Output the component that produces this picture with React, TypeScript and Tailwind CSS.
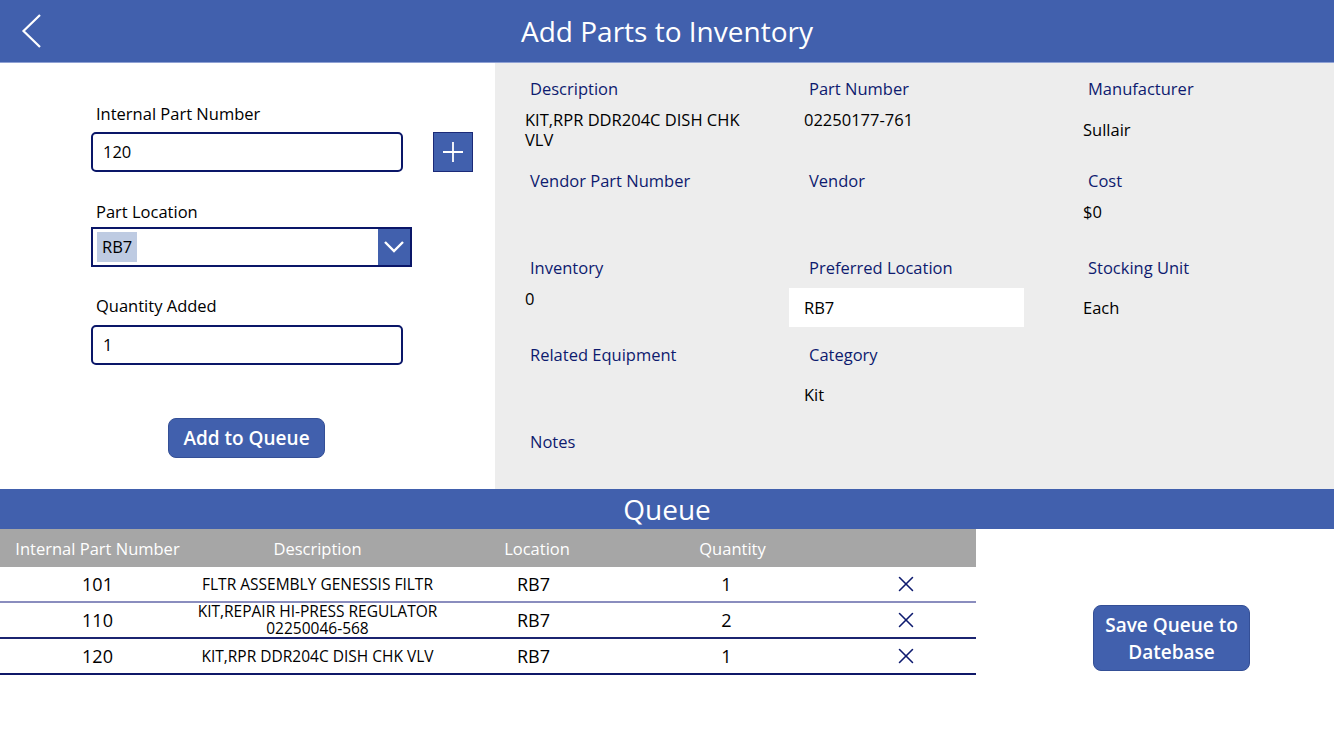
import { X } from "lucide-react";

const queue = [
  { id: "101", desc: ["FLTR ASSEMBLY GENESSIS FILTR"], loc: "RB7", qty: "1", line: "border-[#8A8DBE]" },
  { id: "110", desc: ["KIT,REPAIR HI-PRESS REGULATOR", "02250046-568"], loc: "RB7", qty: "2", line: "border-[#1B2470]" },
  { id: "120", desc: ["KIT,RPR DDR204C DISH CHK VLV"], loc: "RB7", qty: "1", line: "border-[#0F1868]" },
];

function Label(props: { children: React.ReactNode }) {
  return <div className="h-6 pl-[5px] leading-6 text-[16.5px] text-[#0E1B6F]">{props.children}</div>;
}

function Field(props: { label: string; value?: React.ReactNode; mt?: string }) {
  return (
    <div className="flex flex-col">
      <Label>{props.label}</Label>
      {props.value && <div className={`${props.mt ?? "mt-[9px]"} text-[16.5px] leading-5 text-black`}>{props.value}</div>}
    </div>
  );
}

export default function App() {
  return (
    <div className="flex h-[750px] w-[1334px] flex-col overflow-hidden bg-white font-['Open_Sans',sans-serif]">
      {/* header */}
      <div className="grid h-[63px] grid-cols-[80px_1fr_80px] items-center border-b border-[#8FA1D4] bg-[#4160AD]">
        <svg width="80" height="62" viewBox="0 0 80 62">
          <path d="M40 15 L23.5 31 L40 47" fill="none" stroke="white" strokeWidth="2.2" />
        </svg>
        <div className="text-center text-[28px] text-white">Add Parts to Inventory</div>
        <div />
      </div>

      <div className="flex h-[426px]">
        {/* left form */}
        <div className="flex w-[495px] flex-col pl-[91px] pt-[39px]">
          <div className="h-6 pl-[5px] leading-6 text-[16.5px] text-black">Internal Part Number</div>
          <div className="mt-[6px] flex items-center gap-[30px]">
            <div className="flex h-10 w-[312px] items-center rounded-[5px] border-2 border-[#0A1668] pl-[10px] text-[16.5px] text-black">120</div>
            <div className="flex h-10 w-10 items-center justify-center border border-[#1B2A78] bg-[#4160AD]">
              <svg width="24" height="24" viewBox="0 0 24 24">
                <path d="M12 2 V22 M2 12 H22" stroke="white" strokeWidth="1.8" />
              </svg>
            </div>
          </div>

          <div className="mt-[28px] h-6 pl-[5px] leading-6 text-[16.5px] text-black">Part Location</div>
          <div className="mt-[3px] flex h-10 w-[321px] border-2 border-[#0A1668]">
            <div className="flex flex-1 items-center pl-[4px]">
              <span className="bg-[#BECBE2] px-[5px] py-[5px] text-[16.5px] leading-5 text-black">RB7</span>
            </div>
            <div className="flex w-[32px] items-center justify-center bg-[#4160AD]">
              <svg width="22" height="14" viewBox="0 0 22 14">
                <path d="M2 2 L11 11 L20 2" fill="none" stroke="white" strokeWidth="2.4" />
              </svg>
            </div>
          </div>

          <div className="mt-[27px] h-6 pl-[5px] leading-6 text-[16.5px] text-black">Quantity Added</div>
          <div className="mt-[7px] flex h-[40px] w-[312px] items-center rounded-[5px] border-2 border-[#0A1668] pl-[10px] text-[16.5px] text-black">1</div>

          <button className="ml-[77px] mt-[53px] flex h-[40px] w-[157px] items-center justify-center rounded-[8px] border border-[#344F96] bg-[#4160AD] text-[19px] font-semibold text-white">
            Add to Queue
          </button>
        </div>

        {/* part details */}
        <div className="grid flex-1 grid-cols-[279px_279px_1fr] grid-rows-[92px_87px_87px_87px_1fr] bg-[#EDEDED] pl-[30px] pt-[14px]">
          <Field label="Description" value={<div className="w-[240px]">KIT,RPR DDR204C DISH CHK VLV</div>} />
          <Field label="Part Number" value="02250177-761" />
          <Field label="Manufacturer" value="Sullair" mt="mt-[19px]" />

          <Field label="Vendor Part Number" />
          <Field label="Vendor" />
          <Field label="Cost" value="$0" />

          <Field label="Inventory" value="0" />
          <div className="flex flex-col">
            <Label>Preferred Location</Label>
            <div className="-ml-[15px] mt-[8px] flex h-[39px] w-[235px] items-center bg-white pl-[15px] pt-[1px] text-[16.5px] text-black">RB7</div>
          </div>
          <Field label="Stocking Unit" value="Each" mt="mt-[18px]" />

          <Field label="Related Equipment" />
          <Field label="Category" value="Kit" mt="mt-[18px]" />
          <div />

          <Field label="Notes" />
        </div>
      </div>

      {/* queue */}
      <div className="flex h-[40px] items-center justify-center bg-[#4160AD] pb-[1px] text-[28px] text-white">Queue</div>

      <div className="flex flex-1">
        <div className="w-[976px]">
          <div className="grid h-[38px] grid-cols-[195px_245px_194px_197px_1fr] items-center bg-[#A6A6A6] pt-[3px] text-[16.5px] text-white">
            <div className="text-center">Internal Part Number</div>
            <div className="text-center">Description</div>
            <div className="text-center">Location</div>
            <div className="text-center">Quantity</div>
            <div />
          </div>
          {queue.map((r) => (
            <div key={r.id} className={`grid h-[36px] grid-cols-[195px_245px_194px_197px_1fr] items-center border-b-2 ${r.line} text-black`}>
              <div className="text-center text-[18px]">{r.id}</div>
              <div className="text-center text-[15.5px] leading-[17px]">
                {r.desc.map((d) => (
                  <div key={d}>{d}</div>
                ))}
              </div>
              <div className="pl-[77px] text-[18px]">{r.loc}</div>
              <div className="pr-[12px] text-center text-[18px]">{r.qty}</div>
              <div className="flex justify-center pl-[4px]">
                <X size={26} strokeWidth={1.4} className="text-[#0E1B6F]" />
              </div>
            </div>
          ))}
        </div>
        <div className="flex-1 pl-[117px] pt-[76px]">
          <button className="flex h-[66px] w-[157px] flex-col items-center justify-center rounded-[8px] border border-[#344F96] bg-[#4160AD] pt-[1px] text-[19px] font-semibold leading-[27px] text-white">
            <span>Save Queue to</span>
            <span>Datebase</span>
          </button>
        </div>
      </div>
    </div>
  );
}
